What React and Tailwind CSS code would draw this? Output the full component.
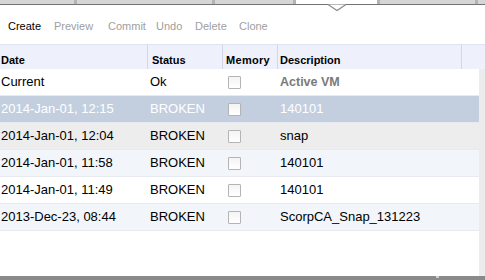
import React from "react";

const rows = [
  { date: "Current", status: "Ok", desc: "Active VM", bg: "bg-white", kind: "current" },
  { date: "2014-Jan-01, 12:15", status: "BROKEN", desc: "140101", bg: "bg-[#c3cfdf]", kind: "sel" },
  { date: "2014-Jan-01, 12:04", status: "BROKEN", desc: "snap", bg: "bg-[#ededed]", kind: "n" },
  { date: "2014-Jan-01, 11:58", status: "BROKEN", desc: "140101", bg: "bg-[#f2f5fa]", kind: "n" },
  { date: "2014-Jan-01, 11:49", status: "BROKEN", desc: "140101", bg: "bg-white", kind: "n" },
  { date: "2013-Dec-23, 08:44", status: "BROKEN", desc: "ScorpCA_Snap_131223", bg: "bg-[#f2f5fa]", kind: "n" },
];

function Check() {
  return (
    <div className="w-[13px] h-[13px] border border-[#b4b4b4] bg-gradient-to-b from-[#f4f4f4] to-[#ffffff] rounded-[1px]" />
  );
}

export default function App() {
  return (
    <div className="relative w-[485px] h-[280px] overflow-hidden bg-white font-['Liberation_Sans',Arial,sans-serif] text-black">
      {/* tab strip */}
      <div className="flex h-[4px]">
        <div className="w-[74px] bg-[#d6d6d6]" />
        <div className="w-[3px] bg-[#b3b3b3]" />
        <div className="w-[135px] bg-[#d6d6d6]" />
        <div className="w-[3px] bg-[#b3b3b3]" />
        <div className="w-[78px] bg-[#d6d6d6]" />
        <div className="w-[3px] bg-[#b3b3b3]" />
        <div className="w-[81px] bg-white" />
        <div className="w-[3px] bg-[#b3b3b3]" />
        <div className="w-[95px] bg-[#d6d6d6]" />
        <div className="w-[3px] bg-[#b3b3b3]" />
        <div className="flex-1 bg-[#d6d6d6]" />
      </div>
      <div className="h-[1px] bg-[#737373]" />
      <svg className="absolute left-[328px] top-[4px]" width="18" height="8" viewBox="0 0 18 8">
        <polygon points="0,0.5 9,6.5 18,0.5" fill="#ffffff" />
        <polyline points="0,0.5 9,6.5 18,0.5" fill="none" stroke="#8a8a8a" strokeWidth="1.2" />
      </svg>

      {/* toolbar */}
      <div className="flex items-center h-[39px] pt-[4px] pl-[8px] text-[11px] whitespace-nowrap">
        <span className="w-[46px] text-black">Create</span>
        <span className="w-[54px] text-[#a0a0a0]">Preview</span>
        <span className="w-[48px] text-[#a0a0a0]">Commit</span>
        <span className="w-[39px] text-[#a0a0a0]">Undo</span>
        <span className="w-[44px] text-[#a0a0a0]">Delete</span>
        <span className="text-[#a0a0a0]">Clone</span>
      </div>

      {/* header */}
      <div className="flex h-[25px] bg-[#eef0fc] border-t border-[#dfe3f2] text-[11px] font-bold">
        <div className="w-[147px] pl-[1px] pt-[7px]">Date</div>
        <div className="w-[1px] bg-[#d2d6e6]" />
        <div className="w-[74px] pl-[4px] pt-[7px]">Status</div>
        <div className="w-[1px] bg-[#d2d6e6]" />
        <div className="w-[54px] pl-[3px] pt-[7px] tracking-[0.3px]">Memory</div>
        <div className="w-[1px] bg-[#d2d6e6]" />
        <div className="w-[183px] pl-[2px] pt-[7px]">Description</div>
        <div className="w-[1px] bg-[#d2d6e6]" />
        <div className="flex-1" />
      </div>

      {/* body */}
      <div className="flex">
        <div className="w-[479px]">
          {rows.map((r, i) => {
            const txt = r.kind === "sel" ? "text-white" : "text-black";
            return (
              <div
                key={i}
                className={`flex items-center h-[27px] border-b border-[#e7eaf0] text-[13px] ${r.bg} ${txt}`}
              >
                <div className="w-[150px] pl-[1px]">{r.date}</div>
                <div className="w-[78px]">{r.status}</div>
                <div className="w-[52px]">
                  <Check />
                </div>
                <div className="flex-1">
                  {r.kind === "current" ? (
                    <span className="font-bold text-[#7a7a7a] text-[12.5px]">{r.desc}</span>
                  ) : (
                    r.desc
                  )}
                </div>
              </div>
            );
          })}
        </div>
        <div className="w-[6px] h-[207px] bg-[#ececec]" />
      </div>

      {/* bottom bar */}
      <div className="absolute left-0 right-0 bottom-0 h-[4px] bg-[#8a8a8a]">
        <div className="absolute left-[436px] top-0 w-[3px] h-[2px] bg-[#cfcfcf]" />
      </div>
    </div>
  );
}
